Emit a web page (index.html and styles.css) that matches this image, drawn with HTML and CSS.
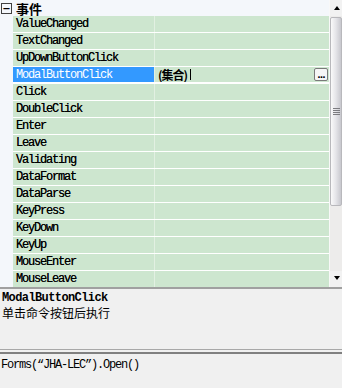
FILE: index.html
```html
<!DOCTYPE html>
<html>
<head>
	<meta charset="utf-8">
	<title>属性 - 事件</title>
	<link rel="stylesheet" href="styles.css">
</head>
<body>
<div class="grid">
	<div class="list">
		<div class="cat"><span class="toggle">−</span><b>事件</b></div>
		<div class="row"><span class="name">ValueChanged</span><span class="value"></span></div>
		<div class="row"><span class="name">TextChanged</span><span class="value"></span></div>
		<div class="row"><span class="name">UpDownButtonClick</span><span class="value"></span></div>
		<div class="row sel"><span class="name">ModalButtonClick</span><span class="value"><b>(集合)</b><i class="caret"></i><span class="dots">...</span></span></div>
		<div class="row"><span class="name">Click</span><span class="value"></span></div>
		<div class="row"><span class="name">DoubleClick</span><span class="value"></span></div>
		<div class="row"><span class="name">Enter</span><span class="value"></span></div>
		<div class="row"><span class="name">Leave</span><span class="value"></span></div>
		<div class="row"><span class="name">Validating</span><span class="value"></span></div>
		<div class="row"><span class="name">DataFormat</span><span class="value"></span></div>
		<div class="row"><span class="name">DataParse</span><span class="value"></span></div>
		<div class="row"><span class="name">KeyPress</span><span class="value"></span></div>
		<div class="row"><span class="name">KeyDown</span><span class="value"></span></div>
		<div class="row"><span class="name">KeyUp</span><span class="value"></span></div>
		<div class="row"><span class="name">MouseEnter</span><span class="value"></span></div>
		<div class="row"><span class="name">MouseLeave</span><span class="value"></span></div>
	</div>
	<div class="scroll">
		<div class="arrow up"></div>
		<div class="thumb"><i></i><i></i><i></i><i></i></div>
		<div class="track"></div>
		<div class="arrow down"></div>
	</div>
</div>
<div class="desc">
	<div class="title">ModalButtonClick</div>
	<div class="text">单击命令按钮后执行</div>
</div>
<div class="split"></div>
<div class="code">Forms(“JHA-LEC”).Open()</div>
</body>
</html>
```

FILE: styles.css
```css
body,div{margin:0;padding:0;}
body{background:#f0f0f0;width:342px;height:388px;overflow:hidden;font:12px/14px "Liberation Mono","Noto Sans CJK SC",monospace;color:#000;}
.grid{display:flex;height:287px;overflow:hidden;background:#f4f7fb;}
.list{width:329px;display:flex;flex-direction:column;}
.cat{height:16px;display:flex;align-items:center;flex-shrink:0;}
.cat .toggle{width:9px;height:9px;border:1px solid #404040;margin:0 4px 0 1px;font:bold 10px/9px "DejaVu Sans",sans-serif;text-align:center;color:#000;}
.cat b{font:bold 13px/15px "Noto Sans CJK SC",sans-serif;}
.row{display:grid;grid-template-columns:141px 174px;column-gap:1px;margin-left:13px;height:16px;border-bottom:1px solid #fff;background:#e2f0e2;flex-shrink:0;}
.row .name,.row .value{background:#cde6cf;display:flex;align-items:center;white-space:nowrap;overflow:hidden;}
.row .name{padding-left:3px;letter-spacing:-1.2px;text-shadow:0 0 0.2px #333;}
.row.sel .name{background:#3399ff;color:#fff;text-shadow:none;}
.row.sel{border-bottom:2px solid #fff;height:15px;}
.row .value{position:relative;}
.row .value b{font:bold 12px/14px "Noto Sans CJK SC",sans-serif;margin-left:3px;letter-spacing:-1px;}
.row .caret{display:inline-block;width:1px;height:11px;background:#000;margin-left:3px;}
.dots{position:absolute;right:1px;top:1px;width:12px;height:11px;border:1px solid #7a7a7a;border-radius:2px;background:#f6f6f6;font:bold 9px/13px "DejaVu Sans",sans-serif;text-align:center;letter-spacing:-1px;color:#000;}
.scroll{width:13px;display:flex;flex-direction:column;background:#edeceb;border-left:1px solid #f8f8f8;}
.arrow{height:16px;position:relative;background:#f2f2f2;}
.arrow:after{content:"";position:absolute;left:4px;border-left:3px solid transparent;border-right:3px solid transparent;}
.up:after{top:6px;border-bottom:4px solid #000;}
.down:after{top:5px;border-top:4px solid #000;}
.thumb{height:187px;margin-top:1px;border:1px solid #b8b8bc;border-radius:2px;background:linear-gradient(to right,#fafafa,#e4e4e8 50%,#c8c8ce);display:flex;flex-direction:column;justify-content:center;align-items:center;gap:1px;}
.thumb i{display:block;width:7px;height:1px;background:#7c7c80;}
.track{flex:1;}
.desc{height:57px;border-top:2px solid #a0a0a0;padding:3px 2px 0;}
.desc .title{font-weight:bold;letter-spacing:-0.6px;line-height:12px;}
.desc .text{font:12px/16px "Noto Sans CJK SC",sans-serif;margin-top:1px;}
.split{height:2px;border-top:1px solid #a8a8a8;border-bottom:2px solid #808080;}
.code{padding:4px 1px 0;letter-spacing:-1.2px;}
```
